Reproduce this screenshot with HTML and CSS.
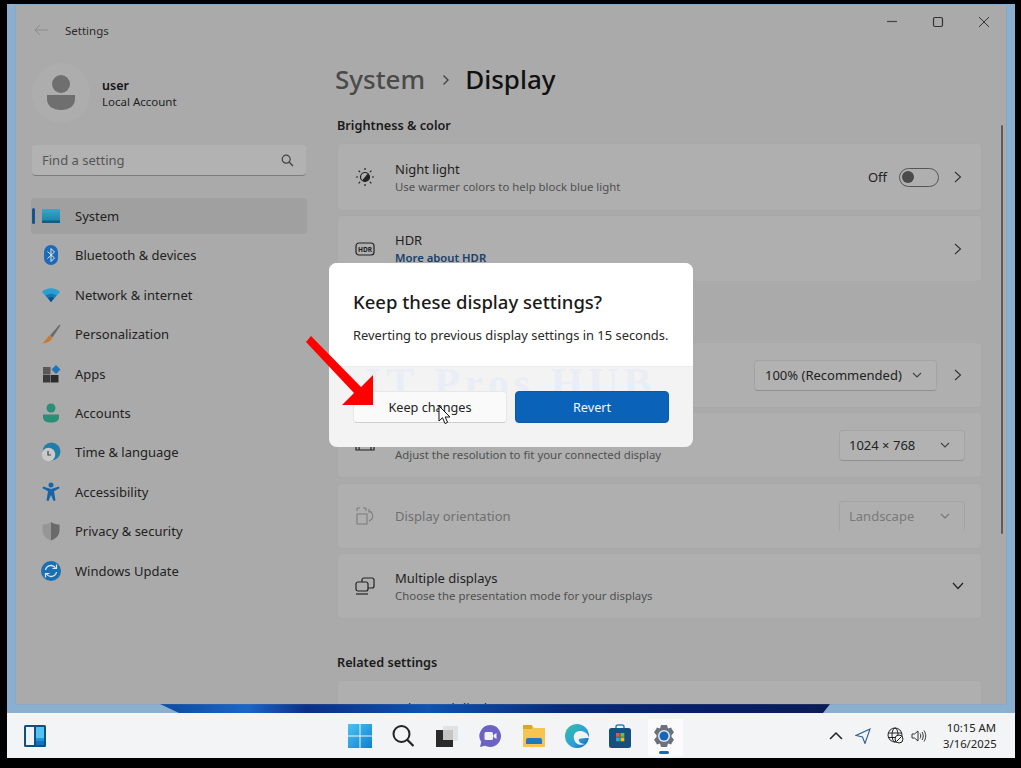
FILE: index.html
```html
<!DOCTYPE html>
<html lang="en">
<head>
<meta charset="utf-8">
<title>Settings</title>
<link rel="stylesheet" href="styles.css">
</head>
<body>
<div class="screen">
  <div class="desktop">
    <div class="wallpaper"></div>
    <div class="window">
      <aside class="sidebar">
        <div class="titlebar">
          <svg class="back" width="16" height="12" viewBox="0 0 16 12"><path d="M15 6H2M7 1L2 6l5 5" fill="none" stroke="#8c8c8c" stroke-width="1"/></svg>
          <span class="app-title">Settings</span>
        </div>
        <div class="profile">
          <div class="avatar">
            <svg width="30" height="36" viewBox="0 0 30 36"><circle cx="15" cy="9" r="9" fill="#6f6f6f"/><path d="M1 20h28v4c0 7-6 11-14 11S1 31 1 24z" fill="#6f6f6f"/></svg>
          </div>
          <div class="profile-text"><div class="user-name">user</div><div class="user-kind">Local Account</div></div>
        </div>
        <div class="search">
          <span class="search-text">Find a setting</span>
          <svg width="13" height="13" viewBox="0 0 13 13"><circle cx="5.2" cy="5.2" r="4" fill="none" stroke="#444" stroke-width="1.2"/><path d="M8 8l4 4" stroke="#444" stroke-width="1.4"/></svg>
        </div>
        <nav class="nav">
          <div class="nav-item selected"><span class="marker"></span>
            <svg class="nav-icon" width="20" height="16" viewBox="0 0 20 16"><defs><linearGradient id="sys" x1="0" y1="0" x2="0" y2="1"><stop offset="0" stop-color="#3aa6c9"/><stop offset="1" stop-color="#167fa8"/></linearGradient></defs><rect x="1" y="1" width="18" height="14" rx="1" fill="url(#sys)"/><rect x="1" y="12.5" width="18" height="2.5" fill="#155b85"/></svg>
            <span>System</span></div>
          <div class="nav-item">
            <svg class="nav-icon" width="20" height="22" viewBox="0 0 20 22"><rect x="3" y="1" width="14" height="20" rx="7" fill="#1d6bb8"/><path d="M6.5 7.500l7 6.500-3.500 3.500V4.500l3.500 3.500-7 6.500" fill="none" stroke="#e6e6e6" stroke-width="1"/></svg>
            <span>Bluetooth &amp; devices</span></div>
          <div class="nav-item">
            <svg class="nav-icon" width="20" height="16" viewBox="0 0 20 16"><path d="M1 5c5-5 13-5 18 0l-9 10z" fill="#2a9fd0"/><path d="M4.500 8.500c3.500-2.500 7.500-2.500 11 0L10 15z" fill="#1877b5"/><path d="M7 11c2-1.200 4-1.200 6 0l-3 4z" fill="#0d4f8f"/></svg>
            <span>Network &amp; internet</span></div>
          <div class="nav-item">
            <svg class="nav-icon" width="20" height="20" viewBox="0 0 20 20"><path d="M18.500 0.500L9 11.500l2.500 2 8-12z" fill="#6b6b6b"/><path d="M8.500 11.500l2.800 2.300C10 17.500 6 19 1 19.500c3-2 4.500-5.500 7.500-8z" fill="#c97a32"/></svg>
            <span>Personalization</span></div>
          <div class="nav-item">
            <svg class="nav-icon" width="20" height="18" viewBox="0 0 20 18"><rect x="2" y="2" width="7.500" height="7.500" fill="#585858"/><rect x="2" y="10" width="7.500" height="7.500" fill="#3a3a3a"/><rect x="10" y="10" width="7.500" height="7.500" fill="#2b2b2b"/><path d="M15 0l4.500 4.500L15 9l-4.500-4.500z" fill="#1f74bc"/></svg>
            <span>Apps</span></div>
          <div class="nav-item">
            <svg class="nav-icon" width="20" height="20" viewBox="0 0 20 20"><circle cx="10" cy="5" r="4.500" fill="#2a8f76"/><path d="M2 11.500h16v3c0 3-3 5-8 5s-8-2-8-5z" fill="#2a8f76"/></svg>
            <span>Accounts</span></div>
          <div class="nav-item">
            <svg class="nav-icon" width="20" height="20" viewBox="0 0 20 20"><circle cx="10.500" cy="9.500" r="9" fill="#1f7fa8"/><circle cx="7.500" cy="12.500" r="6.800" fill="#c9c9c9"/><path d="M7 9v4h3" fill="none" stroke="#444" stroke-width="1.200"/></svg>
            <span>Time &amp; language</span></div>
          <div class="nav-item">
            <svg class="nav-icon" width="20" height="20" viewBox="0 0 20 20"><circle cx="10" cy="3" r="2.500" fill="#1565a8"/><path d="M2 4.500l8 2.500 8-2.500.5 1.800-5.500 3 1.500 9.200-2 .5L10 13l-2.500 6-2-.5L7 9.300 1.500 6.300z" fill="#1565a8"/></svg>
            <span>Accessibility</span></div>
          <div class="nav-item">
            <svg class="nav-icon" width="20" height="20" viewBox="0 0 20 20"><path d="M10 1c3 2 6 2.500 8.500 2.500v6c0 5-4 8.500-8.500 10z" fill="#6a6a6a"/><path d="M10 1C7 3 4 3.500 1.500 3.500v6c0 5 4 8.500 8.500 10z" fill="#969696"/></svg>
            <span>Privacy &amp; security</span></div>
          <div class="nav-item">
            <svg class="nav-icon" width="20" height="20" viewBox="0 0 20 20"><circle cx="10" cy="10" r="10" fill="#1a6fb3"/><path d="M4.500 9a5.500 5.500 0 0 1 10-2M15.500 11a5.500 5.500 0 0 1-10 2" fill="none" stroke="#dfe8f0" stroke-width="1.300"/><path d="M15.500 3.500v4h-4M4.500 16.500v-4h4" fill="none" stroke="#dfe8f0" stroke-width="1.200"/></svg>
            <span>Windows Update</span></div>
        </nav>
      </aside>
      <main class="main">
        <div class="controls">
          <svg width="12" height="12" viewBox="0 0 12 12"><path d="M1 5.500h10" stroke="#444" stroke-width="1.200"/></svg>
          <svg width="12" height="12" viewBox="0 0 12 12"><rect x="1.500" y="1.500" width="9" height="9" rx="1.500" fill="none" stroke="#333" stroke-width="1.200"/></svg>
          <svg width="12" height="12" viewBox="0 0 12 12"><path d="M1 1l10 10M11 1L1 11" stroke="#333" stroke-width="1"/></svg>
        </div>
        <h1 class="crumbs"><span class="crumb-parent">System</span>
          <svg class="crumb-sep" width="8" height="12" viewBox="0 0 8 12"><path d="M1.500 1.500L6 6l-4.500 4.500" fill="none" stroke="#444" stroke-width="1.400"/></svg>
          <span class="crumb-current">Display</span></h1>
        <h2 class="section first">Brightness &amp; color</h2>
        <div class="card h68">
          <svg class="card-icon" width="20" height="20" viewBox="0 0 20 20"><circle cx="10" cy="10" r="4.500" fill="none" stroke="#222" stroke-width="1.200"/><path d="M10 5.500a4.500 4.500 0 0 1 0 9z" fill="#222" transform="rotate(40 10 10)"/><path d="M10 1v2M10 17v2M1 10h2M17 10h2M3.600 3.600l1.500 1.500M14.900 14.900l1.500 1.500M3.600 16.400l1.500-1.500M14.900 5.100l1.500-1.500" stroke="#222" stroke-width="1.200"/></svg>
          <div class="card-text"><div class="card-title">Night light</div><div class="card-sub">Use warmer colors to help block blue light</div></div>
          <span class="off">Off</span>
          <span class="toggle"><span class="knob"></span></span>
          <svg class="chev" width="8" height="12" viewBox="0 0 8 12"><path d="M1 1l5.500 5L1 11" fill="none" stroke="#333" stroke-width="1.100"/></svg>
        </div>
        <div class="card h67">
          <svg class="card-icon" width="20" height="16" viewBox="0 0 20 16"><rect x="1" y="2" width="18" height="12" rx="3" fill="none" stroke="#222" stroke-width="1.200"/><text x="10" y="10.500" class="hdr-label" text-anchor="middle">HDR</text></svg>
          <div class="card-text"><div class="card-title">HDR</div><div class="card-link">More about HDR</div></div>
          <svg class="chev" width="8" height="12" viewBox="0 0 8 12"><path d="M1 1l5.500 5L1 11" fill="none" stroke="#333" stroke-width="1.100"/></svg>
        </div>
        <div class="section-gap"></div>
        <div class="card h66">
          <div class="card-text"></div>
          <span class="select wide">100% (Recommended)<svg width="10" height="6" viewBox="0 0 10 6"><path d="M1 1l4 4 4-4" fill="none" stroke="#444" stroke-width="1.100"/></svg></span>
          <svg class="chev" width="8" height="12" viewBox="0 0 8 12"><path d="M1 1l5.500 5L1 11" fill="none" stroke="#333" stroke-width="1.100"/></svg>
        </div>
        <div class="card h66 gap5">
          <svg class="card-icon" width="20" height="16" viewBox="0 0 20 16"><rect x="4" y="3" width="12" height="10" rx="1" fill="none" stroke="#222" stroke-width="1.200"/><path d="M1 5v8h3M19 5v8h-3" fill="none" stroke="#222" stroke-width="1.200"/></svg>
          <div class="card-text"><div class="title-space"></div><div class="card-sub">Adjust the resolution to fit your connected display</div></div>
          <span class="select res">1024 × 768<svg width="10" height="6" viewBox="0 0 10 6"><path d="M1 1l4 4 4-4" fill="none" stroke="#444" stroke-width="1.100"/></svg></span>
        </div>
        <div class="card h66">
          <svg class="card-icon" width="20" height="20" viewBox="0 0 20 20"><path d="M2 8h10v10H2zM2 2h3M8 2h3M2 2v3M11 2v3" fill="none" stroke="#7d7d7d" stroke-width="1.100"/><path d="M14 5c3 1 5 4 3 8l-3 2M14 3v3h3" fill="none" stroke="#7d7d7d" stroke-width="1.100"/></svg>
          <div class="card-text"><div class="card-title muted">Display orientation</div></div>
          <span class="select res dim">Landscape<svg width="10" height="6" viewBox="0 0 10 6"><path d="M1 1l4 4 4-4" fill="none" stroke="#777" stroke-width="1.100"/></svg></span>
        </div>
        <div class="card h66">
          <svg class="card-icon" width="20" height="20" viewBox="0 0 20 20"><rect x="7" y="2" width="12" height="10" rx="2" fill="none" stroke="#222" stroke-width="1.200"/><rect x="1" y="6" width="12" height="9" rx="2" fill="#afafaf" stroke="#222" stroke-width="1.200"/><path d="M1 18h12" stroke="#222" stroke-width="1.200"/></svg>
          <div class="card-text"><div class="card-title">Multiple displays</div><div class="card-sub">Choose the presentation mode for your displays</div></div>
          <svg class="chev wide-chev" width="12" height="8" viewBox="0 0 12 8"><path d="M1 1l5 5.500L11 1" fill="none" stroke="#222" stroke-width="1.200"/></svg>
        </div>
        <h2 class="section related">Related settings</h2>
        <div class="card h68 advanced">
          <div class="card-title">Advanced display</div>
        </div>
        <div class="scrollbar"></div>
      </main>
    </div>
  </div>
  <footer class="taskbar">
    <svg class="widgets" width="24" height="24" viewBox="0 0 24 24"><rect x="1" y="1" width="22" height="22" rx="1.500" fill="#13507f"/><rect x="3" y="3" width="8" height="18" fill="#eef3f7"/><rect x="13" y="3" width="8" height="11" fill="#53c3f3"/><rect x="13" y="14" width="8" height="3" fill="#1c95dd"/><rect x="13" y="17" width="8" height="4" fill="#1273c4"/></svg>
    <div class="task-center">
      <svg width="24" height="24" viewBox="0 0 24 24"><defs><linearGradient id="win" x1="0" y1="0" x2="1" y2="1"><stop offset="0" stop-color="#4cc2f1"/><stop offset="1" stop-color="#0f7fd0"/></linearGradient></defs><path d="M0 0h11.500v11.500H0zM12.500 0H24v11.500H12.500zM0 12.500h11.500V24H0zM12.500 12.500H24V24H12.500z" fill="url(#win)"/></svg>
      <svg width="24" height="24" viewBox="0 0 24 24"><circle cx="10.500" cy="10" r="8" fill="none" stroke="#222" stroke-width="2"/><path d="M16 15.500L22.500 22" stroke="#222" stroke-width="2.200"/></svg>
      <svg width="24" height="24" viewBox="0 0 24 24"><rect x="8" y="2" width="15" height="15" rx="1" fill="#e2e2e2"/><rect x="1" y="6" width="17" height="17" fill="#2a2a2a"/><rect x="8" y="6" width="10" height="10" fill="#c4c4c4"/></svg>
      <svg width="24" height="24" viewBox="0 0 24 24"><path d="M12 1a11 11 0 1 1-5 20.800L2 23l1.200-5A11 11 0 0 1 12 1z" fill="#6b62c4"/><rect x="6.500" y="8" width="8.500" height="8" rx="1.500" fill="#f2f2f2"/><path d="M15.500 11l3-2v6l-3-2z" fill="#f2f2f2"/></svg>
      <svg width="24" height="24" viewBox="0 0 24 24"><path d="M1 1h9l2 3h11v19H1z" fill="#f5c451"/><rect x="1" y="1" width="9" height="4" fill="#d9a62e"/><path d="M6 14h12a2 2 0 0 1 2 2v4H4v-4a2 2 0 0 1 2-2z" fill="#1e78c4"/></svg>
      <svg width="24" height="24" viewBox="0 0 24 24"><defs><linearGradient id="edge" x1="0" y1="0" x2="1" y2="1"><stop offset="0" stop-color="#35c1a1"/><stop offset="0.600" stop-color="#2a9fdc"/><stop offset="1" stop-color="#105fa8"/></linearGradient></defs><circle cx="12" cy="12" r="12" fill="url(#edge)"/><path d="M24 14c-1-5-5-7-9-7-5 0-7 4-6 8 1 5 6 7 11 5-5 0-7-3-6-5 2-1 6-1 10-1z" fill="#f3f3f3"/></svg>
      <svg width="24" height="24" viewBox="0 0 24 24"><path d="M8 5V3a2 2 0 0 1 2-2h4a2 2 0 0 1 2 2v2" fill="none" stroke="#2c7fc2" stroke-width="1.500"/><rect x="1" y="4" width="22" height="20" rx="2.500" fill="#174f80"/><rect x="8" y="9" width="3.800" height="3.800" fill="#e8572b"/><rect x="12.500" y="9" width="3.800" height="3.800" fill="#7ab83a"/><rect x="8" y="13.500" width="3.800" height="3.800" fill="#2ba5e8"/><rect x="12.500" y="13.500" width="3.800" height="3.800" fill="#f5bb21"/></svg>
      <span class="active-app">
        <svg width="24" height="24" viewBox="0 0 24 24"><path d="M9 1h6l1 3.500 3-1 3 5-2.500 2.500v2L22 15.500l-3 5-3-1-1 3.500H9l-1-3.500-3 1-3-5L4.500 13v-2L2 8.500l3-5 3 1z" fill="#68717d"/><circle cx="12" cy="12" r="6" fill="#e8e8e8"/><circle cx="12" cy="12" r="4.500" fill="#1566ba"/></svg>
        <span class="underline"></span>
      </span>
    </div>
    <div class="tray">
      <svg class="t-caret" width="14" height="9" viewBox="0 0 14 9"><path d="M1 8l6-6 6 6" fill="none" stroke="#222" stroke-width="1.500"/></svg>
      <svg class="t-loc" width="16" height="16" viewBox="0 0 16 16"><path d="M15 1L1 7.500l6.500 1.500L10 15.500z" fill="none" stroke="#2d5f8f" stroke-width="1.100"/></svg>
      <svg class="t-globe" width="17" height="17" viewBox="0 0 17 17"><circle cx="8" cy="8" r="7" fill="none" stroke="#222" stroke-width="1"/><ellipse cx="8" cy="8" rx="3" ry="7" fill="none" stroke="#222" stroke-width="1"/><path d="M1 6h14M1 10.500h9" stroke="#222" stroke-width="1"/><circle cx="12" cy="12" r="4" fill="#f3f3f3" stroke="#222" stroke-width="1"/><path d="M9.500 14.500l5-5" stroke="#222" stroke-width="1"/></svg>
      <svg class="t-vol" width="16" height="14" viewBox="0 0 16 14"><path d="M1 5v4h2.500L7 12V2L3.500 5z" fill="none" stroke="#333" stroke-width="1"/><path d="M9 4.500c1 1.500 1 3.500 0 5M11 3c1.700 2.500 1.700 5.500 0 8M13 1.500c2.300 3.500 2.300 7.500 0 11" fill="none" stroke="#333" stroke-width="1"/></svg>
      <div class="clock"><div>10:15 AM</div><div>3/16/2025</div></div>
    </div>
  </footer>
  <section class="dialog">
    <div class="dialog-top">
      <h3 class="dialog-title">Keep these display settings?</h3>
      <p class="dialog-body">Reverting to previous display settings in 15 seconds.</p>
    </div>
    <div class="dialog-foot">
      <span class="watermark">IT Pros HUB</span>
      <button class="btn secondary">Keep changes</button>
      <button class="btn primary">Revert</button>
    </div>
  </section>
  <svg class="arrow" width="75" height="75" viewBox="0 0 75 75"><path d="M1 7L6 1 56 52 68 40 68 70 37 70 49 58z" fill="#fe0000"/></svg>
  <svg class="cursor" width="13" height="20" viewBox="0 0 13 20"><path d="M1 1v15l3.500-3.300L7 18.500l2.600-1.100L7.200 12h4.800z" fill="#fff" stroke="#111" stroke-width="1"/></svg>
</div>
</body>
</html>
```
FILE: styles.css
```css
* { box-sizing: border-box; }
html, body { margin: 0; padding: 0; background: #000; }
body { font-family: "Noto Sans", "Open Sans", sans-serif; color: #1c1c1c; }
.screen { position: relative; width: 1021px; height: 768px; padding: 4px 6px 10px 7px; display: flex; flex-direction: column; overflow: hidden; background: #000; }
.desktop { position: relative; flex: 1; background: #8bafcf; overflow: hidden; }
.wallpaper { position: absolute; left: 0; right: 0; bottom: 0; height: 9px; clip-path: polygon(153px 0, 823px 0, 816px 9px, 172px 9px); background: linear-gradient(90deg, #0f4fa6 0, #0f4fa6 170px, #1c66c8 240px, #0b2f86 300px, #0f52b0 420px, #082a78 560px, #071f68 680px, #0a1d55 823px); }
.window { position: absolute; left: 9px; top: 1px; width: 990px; height: 699px; display: flex; background: #aaaaaa; overflow: hidden; box-shadow: 0 0 1px #8a8a8a; }

.sidebar { width: 321px; flex: none; padding-left: 16px; }
.titlebar { height: 50px; display: flex; align-items: center; padding: 0 0 0 1px; }
.back { margin-right: 16px; }
.app-title { font-size: 11.500px; color: #2a2a2a; }
.profile { display: flex; align-items: center; height: 60px; margin-top: 8px; }
.avatar { width: 58px; height: 60px; border-radius: 50%; background: #adadad; display: flex; align-items: center; justify-content: center; }
.profile-text { margin-left: 12px; padding-top: 1px; }
.user-name { font-size: 12.500px; font-weight: 600; line-height: 17px; color: #151515; }
.user-kind { font-size: 11.500px; line-height: 16px; color: #1f1f1f; }
.search { width: 274px; height: 31px; margin-top: 22px; background: #b2b2b2; border-radius: 4px; border-bottom: 1px solid #7c7c7c; display: flex; align-items: center; justify-content: space-between; padding: 0 12px 0 10px; }
.search-text { font-size: 13px; color: #555; }
.nav { margin: 22px 0 0 -1px; display: flex; flex-direction: column; gap: 3.420px; }
.nav-item { position: relative; width: 276px; height: 36px; display: flex; align-items: center; font-size: 13px; color: #222; border-radius: 4px; }
.nav-item.selected { background: #a0a0a0; }
.nav-icon { flex: none; margin-left: 10px; margin-right: 14px; }
.marker { position: absolute; left: 1px; top: 10px; width: 3px; height: 16px; background: #14558f; border-radius: 2px; }

.main { position: relative; flex: 1; }
.controls { position: absolute; right: 16px; top: 11px; display: flex; gap: 34px; }
.crumbs { margin: 0 0 0 -2px; padding-top: 54px; height: 102px; display: flex; align-items: flex-start; font-size: 26px; font-weight: 500; line-height: 40px; }
.crumb-parent { color: #4a4a4a; }
.crumb-sep { margin: 15px 15px 0 17px; }
.crumb-current { color: #111; }
.section { margin: 0; font-size: 12.700px; font-weight: 600; color: #1a1a1a; line-height: 18px; }
.first { margin-top: 9px; height: 27px; }
.section-gap { height: 56px; }
.related { margin-top: 34px; height: 27px; }
.card { width: 645px; display: flex; align-items: center; padding: 0 19px 0 17px; background: #afafaf; border-radius: 4px; margin-bottom: 4px; border: 1px solid #a8a8a8; }
.h68 { height: 68px; }
.h67 { height: 67px; }
.h66 { height: 66px; }
.gap5 { margin-bottom: 5px; }
.advanced { margin: 0; align-items: flex-start; padding: 18px 0 0 57px; }
.card-icon { flex: none; margin-right: 20px; }
.card-text { flex: 1; min-width: 0; }
.card-title { font-size: 13px; line-height: 18px; color: #1f1f1f; }
.title-space { height: 18px; }
.card-title.muted { color: #6f6f6f; }
.card-sub { font-size: 11.400px; line-height: 17px; color: #505050; }
.card-link { font-size: 11.300px; line-height: 17px; color: #1a3f6b; font-weight: 600; }
.hdr-label { font-family: "Noto Sans", sans-serif; font-size: 6.500px; font-weight: 700; fill: #222; }
.off { font-size: 13px; color: #222; margin-right: 12px; }
.toggle { width: 40px; height: 19px; border: 1px solid #555; border-radius: 10px; display: flex; align-items: center; padding-left: 2px; margin-right: 15px; }
.knob { width: 12px; height: 12px; background: #4a4a4a; border-radius: 50%; }
.chev { flex: none; }
.wide-chev { margin-right: -2px; }
.select { display: flex; align-items: center; justify-content: space-between; height: 31px; font-size: 13px; color: #222; background: #b2b2b2; border: 1px solid #a4a4a4; border-bottom-color: #8f8f8f; border-radius: 4px; }
.select.wide { width: 183px; padding: 0 14px 0 10px; margin-right: 17px; }
.select.res { width: 126px; padding: 0 14px 0 9px; margin-right: -3px; }
.select.dim { color: #7a7a7a; background: none; border-bottom-color: transparent; }
.scrollbar { position: absolute; right: 3px; top: 120px; width: 2px; height: 409px; background: #5c5c5c; border-radius: 1px; }

.taskbar { position: relative; height: 45px; flex: none; background: #f3f4f5; display: flex; align-items: center; }
.widgets { margin-left: 16px; }
.task-center { position: absolute; left: 341px; top: 0; height: 45px; display: flex; align-items: center; gap: 19.400px; }
.active-app { position: relative; display: flex; align-items: center; justify-content: center; }
.active-app::before { content: ""; position: absolute; left: -4px; right: -7px; top: -5px; height: 37px; background: #fbfbfb; }
.active-app svg { position: relative; }
.underline { position: absolute; left: 7px; top: 27px; width: 10px; height: 3px; border-radius: 2px; background: #1a6ab0; }
.tray { position: absolute; left: 0; right: 19px; top: 0; height: 45px; display: flex; align-items: center; justify-content: flex-end; }
.t-loc { margin-left: 12px; }
.t-globe { margin-left: 16px; }
.t-vol { margin-left: 7px; margin-right: 16px; }
.clock { width: 53px; flex: none; font-size: 11.300px; line-height: 16px; text-align: right; color: #222; white-space: nowrap; padding-top: 1px; }

.dialog { position: absolute; left: 329px; top: 263px; width: 364px; height: 184px; border-radius: 8px; overflow: hidden; background: #f3f3f3; }
.dialog-top { height: 104px; background: #fff; padding: 26px 24px 0; border-bottom: 1px solid #ececec; }
.dialog-title { margin: 0; font-size: 18.500px; font-weight: 500; line-height: 26px; color: #1a1a1a; }
.dialog-body { margin: 11px 0 0; font-size: 12.900px; line-height: 18px; color: #2a2a2a; white-space: nowrap; }
.dialog-foot { position: relative; height: 80px; padding: 24px 24px 0; display: flex; gap: 8px; align-items: flex-start; }
.watermark { position: absolute; left: 36px; top: -4px; font-family: "Liberation Serif", serif; font-size: 42px; font-weight: 700; letter-spacing: 5px; color: #ebedf6; white-space: nowrap; line-height: 40px; }
.btn { position: relative; width: 154px; height: 32px; border-radius: 4px; font-family: inherit; font-size: 12.700px; padding: 0; }
.secondary { background: #fafafa; border: 1px solid #e8e8e8; border-bottom-color: #cfcfcf; color: #222; }
.primary { background: #0a63b8; border: 1px solid #0a5aa6; color: #f2f7fb; }
.arrow { position: absolute; left: 305px; top: 335px; }
.cursor { position: absolute; left: 438px; top: 405px; }
```
